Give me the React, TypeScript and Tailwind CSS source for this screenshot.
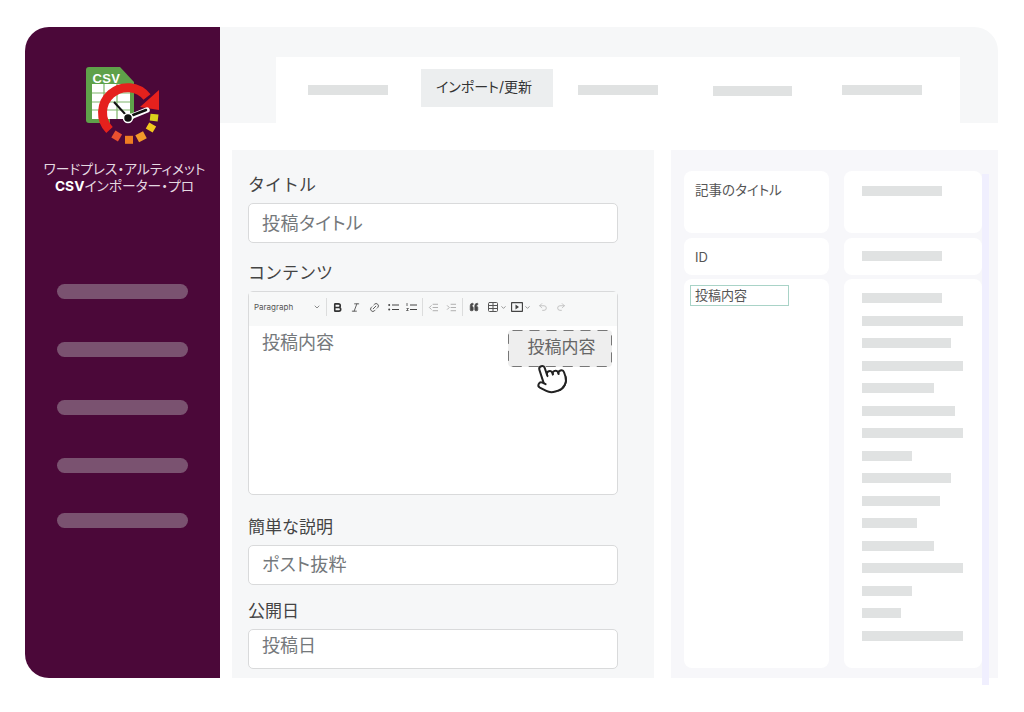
import {
  Bold,
  ChevronDown,
  IndentDecrease,
  IndentIncrease,
  Italic,
  Link2,
  Pointer,
  Quote,
  Redo2,
  Table,
  Undo2,
} from "lucide-react";

const sansJp = "font-['Inter','Noto_Sans_CJK_JP',sans-serif] [font-feature-settings:'palt']";

const bodyBars = [80, 101, 89, 101, 72, 93, 101, 50, 89, 78, 55, 72, 101, 50, 39, 101];

function Logo() {
  return (
    <svg width="74" height="78" viewBox="86 66 74 78" className="block">
      <path d="M89 67h31l14 15v38a3 3 0 0 1-3 3H89a3 3 0 0 1-3-3V70a3 3 0 0 1 3-3z" fill="#5fa14a" />
      <path d="M92 84h38v35H92z" fill="#fff" />
      <path d="M92 93h38M92 102h38M92 110h38M104 84v35M117 84v35" stroke="#7fb56b" strokeWidth="1.2" />
      <text x="92.5" y="83" fill="#fff" fontSize="13" fontWeight="700" letterSpacing=".4" fontFamily="Liberation Sans, sans-serif">
        CSV
      </text>
      <path d="M110 119h24v15h-24z" fill="#4b0839" />
      <path d="M109.5 130A25 25 0 1 1 147 97" fill="none" stroke="#e5211d" strokeWidth="9" />
      <path d="M159 90v20l-19-3z" fill="#e5211d" />
      <path d="M114 102l12 13" stroke="#111" strokeWidth="2" />
      <path d="M130 117l17-7" stroke="#fff" strokeWidth="5.5" strokeLinecap="round" />
      <path d="M133 115l13-5" stroke="#111" strokeWidth="2.5" strokeLinecap="round" />
      <circle cx="128" cy="118" r="4.5" fill="#111" stroke="#fff" strokeWidth="1.5" />
      <path d="M154.5 114.1l-.8 6.9" stroke="#d9d21c" strokeWidth="8" />
      <path d="M152.7 124.4l-3.5 6" stroke="#f2c81e" strokeWidth="8" />
      <path d="M144.9 134.7l-7.7 4.1" stroke="#f39a2a" strokeWidth="8" />
      <path d="M133 139.8h-8" stroke="#ee7d22" strokeWidth="8" />
      <path d="M120 138l-6.600-4" stroke="#e8502f" strokeWidth="8" />
    </svg>
  );
}

function Sidebar() {
  return (
    <aside className="flex w-[195px] shrink-0 flex-col items-center rounded-l-[24px] bg-[#4b0839] pt-[39px]">
      <div className="ml-[1px]">
        <Logo />
      </div>
      <p className={`ml-[4px] mt-[17px] text-center text-[13.75px] leading-[17px] text-[#e4d8e1] ${sansJp}`}>
        ワードプレス・アルティメット
        <br />
        <span className="font-bold text-white">CSV</span>インポーター・プロ
      </p>
      <div className="mt-[89px] flex flex-col gap-[43px]">
        <div className="h-[15px] w-[131px] rounded-full bg-[#7a5270]" />
        <div className="h-[15px] w-[131px] rounded-full bg-[#7a5270]" />
        <div className="h-[15px] w-[131px] rounded-full bg-[#7a5270]" />
        <div className="h-[15px] w-[131px] rounded-full bg-[#7a5270]" />
        <div className="-mt-[3px] h-[15px] w-[131px] rounded-full bg-[#7a5270]" />
      </div>
    </aside>
  );
}

function TabBar() {
  return (
    <div className="h-[96px] rounded-tr-[24px] bg-[#f6f7f8] pl-[56px] pr-[38px] pt-[30px]">
      <div className="flex h-[66px] items-start bg-white pl-[32px]">
        <div className="mt-[28px] h-[10px] w-[80px] bg-[#e0e2e2]" />
        <div className={`ml-[33px] mt-[12px] flex h-[38px] w-[132px] items-center justify-center bg-[#eceeef] pb-[3px] pr-[6px] text-[14px] text-[#333] ${sansJp}`}>
          インポート/更新
        </div>
        <div className="ml-[25px] mt-[28px] h-[10px] w-[80px] bg-[#e0e2e2]" />
        <div className="ml-[55px] mt-[29px] h-[10px] w-[79px] bg-[#e0e2e2]" />
        <div className="ml-[50px] mt-[28px] h-[10px] w-[80px] bg-[#e0e2e2]" />
      </div>
    </div>
  );
}

const labelClass = "text-[17px] leading-[24px] text-[#444] [font-feature-settings:normal]";

function Field({ label, placeholder, textClass }: { label: string; placeholder: string; textClass: string }) {
  return (
    <>
      <div className={labelClass}>{label}</div>
      <div className={`mt-[6px] flex h-[40px] w-[370px] items-center rounded-[5px] border border-[#d9dadb] bg-white pl-[13px] text-[18px] text-[#74787b] ${textClass}`}>
        {placeholder}
      </div>
    </>
  );
}

function TwoRowList({ numbered }: { numbered?: boolean }) {
  return (
    <svg width="11" height="10" viewBox="0 0 11 10" className="shrink-0 text-[#444]">
      <path d="M4 3h7M4 7.500h7" stroke="currentColor" strokeWidth="1" />
      {numbered ? (
        <path d="M1 1v3M.5 6.500h2l-2 2h2" stroke="currentColor" strokeWidth=".8" fill="none" />
      ) : (
        <>
          <circle cx="1.200" cy="3" r="1" fill="currentColor" />
          <circle cx="1.200" cy="7.500" r="1" fill="currentColor" />
        </>
      )}
    </svg>
  );
}

function Toolbar() {
  const icon = "shrink-0 text-[#555]";
  return (
    <div className="flex h-[34px] items-center bg-[#f7f8f8] pb-[4px] pl-[5px] text-[#555]">
      <span className="w-[59px] text-[8px] text-[#555] font-['Inter',sans-serif]">Paragraph</span>
      <ChevronDown size={8} className={icon} />
      <span className="ml-[5px] mr-[5px] h-[18px] w-px bg-[#dcdddd]" />
      <Bold size={11} strokeWidth={3.5} className="shrink-0 text-[#333]" />
      <Italic size={11} className={`${icon} ml-[7px]`} />
      <Link2 size={11} className={`${icon} ml-[8px] -rotate-45`} />
      <span className="ml-[8px]">
        <TwoRowList />
      </span>
      <span className="ml-[7px]">
        <TwoRowList numbered />
      </span>
      <span className="ml-[5px] mr-[4px] h-[18px] w-px bg-[#dcdddd]" />
      <IndentDecrease size={11} className="ml-[1px] shrink-0 text-[#aaa]" />
      <IndentIncrease size={11} className="ml-[7px] shrink-0 text-[#aaa]" />
      <span className="ml-[5px] mr-[5px] h-[18px] w-px bg-[#dcdddd]" />
      <Quote size={10} fill="#444" className={`${icon} ml-[1px] rotate-180`} />
      <Table size={12} className={`${icon} ml-[8px]`} />
      <ChevronDown size={7} className={`${icon} ml-[1px]`} />
      <svg width="12" height="10" viewBox="0 0 12 10" className="ml-[4px] shrink-0 text-[#444]">
        <rect x=".5" y=".5" width="11" height="9" rx="1" fill="none" stroke="currentColor" strokeWidth="1.300" />
        <path d="M4.500 2.500l3.500 2.500-3.500 2.500z" fill="currentColor" />
      </svg>
      <ChevronDown size={7} className={`${icon} ml-[1px]`} />
      <Undo2 size={10} className="ml-[7px] shrink-0 text-[#bbb]" />
      <Redo2 size={10} className="ml-[8px] shrink-0 text-[#bbb]" />
    </div>
  );
}

function FormPanel() {
  return (
    <section className={`h-[528px] w-[422px] shrink-0 bg-[#f6f7f8] pl-[16px] pt-[23px] ${sansJp}`}>
      <Field label="タイトル" placeholder="投稿タイトル" textClass="tracking-[0.5px]" />
      <div className={`mt-[18px] ${labelClass}`}>コンテンツ</div>
      <div className="relative mt-[6px] h-[204px] w-[370px] overflow-visible rounded-[5px] border border-[#d9dadb] bg-white">
        <Toolbar />
        <div className="pl-[13px] pt-[3px] text-[18px] leading-[28px] text-[#74787b]">投稿内容</div>
        <div className="absolute left-[259px] top-[38px] flex h-[37px] w-[104px] items-center justify-center rounded-[4px] bg-[#eeeeee] pb-[2px] pl-[3px] text-[17px] text-[#666]">
          投稿内容
          <svg width="104" height="37" className="absolute left-0 top-0">
            <rect x=".5" y=".5" width="103" height="36" rx="4" fill="none" stroke="#777" strokeDasharray="10 7" />
          </svg>
        </div>
        <Pointer size={34} strokeWidth={1.4} fill="#fff" className="absolute left-[285px] top-[69px] -rotate-[18deg] text-[#222]" />
      </div>
      <div className="mt-[20px]">
        <Field label="簡単な説明" placeholder="ポスト抜粋" textClass="pb-[2px] tracking-[0.3px]" />
      </div>
      <div className="mt-[14px]">
        <Field label="公開日" placeholder="投稿日" textClass="pb-[8px]" />
      </div>
    </section>
  );
}

function Bar({ width }: { width: number }) {
  return <div className="h-[10px] bg-[#e0e2e2]" style={{ width }} />;
}

function MappingPanel() {
  const card = "rounded-[8px] bg-white";
  return (
    <section className={`relative ml-[17px] h-[528px] w-[327px] bg-[#f7f7fa] pl-[13px] pt-[21px] ${sansJp}`}>
      <div className="grid grid-cols-[145px_138px] gap-x-[15px]">
        <div className={`${card} h-[62px] pl-[11px] pt-[9px] text-[13.5px] leading-[20px] text-[#555]`}>記事のタイトル</div>
        <div className={`${card} h-[62px] pl-[18px] pt-[15px]`}>
          <Bar width={80} />
        </div>
        <div className={`${card} mt-[5px] flex h-[37px] items-center pl-[11px] pt-[3px] text-[13px] text-[#555]`}>ID</div>
        <div className={`${card} mt-[5px] h-[37px] pl-[18px] pt-[13px]`}>
          <Bar width={80} />
        </div>
        <div className={`${card} mt-[4px] h-[389px] pl-[6px] pt-[6px]`}>
          <div className="flex h-[21px] w-[99px] items-center border border-[#a9d3c7] pl-[4px] text-[13px] text-[#555]">
            投稿内容
          </div>
        </div>
        <div className={`${card} mt-[4px] flex h-[389px] flex-col gap-[12.5px] pl-[18px] pt-[14px]`}>
          {bodyBars.map((w, i) => (
            <Bar key={i} width={w} />
          ))}
        </div>
      </div>
      <div className="absolute left-[311px] top-[24px] h-[511px] w-[7px] bg-[#f0effe]" />
    </section>
  );
}

export default function App() {
  return (
    <div className="h-[712px] w-[1024px] overflow-hidden bg-white pl-[25px] pt-[27px]">
      <div className="flex h-[651px] w-[973px]">
        <Sidebar />
        <main className="w-[778px]">
          <TabBar />
          <div className="flex pl-[12px] pt-[27px]">
            <FormPanel />
            <MappingPanel />
          </div>
        </main>
      </div>
    </div>
  );
}
